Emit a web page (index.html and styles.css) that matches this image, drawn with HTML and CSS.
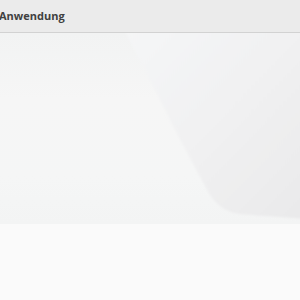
FILE: index.html
```html
<!DOCTYPE html>
<html lang="de">
<head>
<meta charset="UTF-8" />
<meta name="viewport" content="width=device-width, initial-scale=1" />
<title>Anwendung</title>
<link rel="stylesheet" href="styles.css">
</head>
<body>
  <header class="topbar">
    <span class="title">Anwendung</span>
  </header>

  <div class="hero">
    <svg class="hero-art" viewBox="0 0 300 191" preserveAspectRatio="none">
      <defs>
        <linearGradient id="left" x1="0" y1="0" x2="0" y2="1">
          <stop offset="0" stop-color="#f2f3f3" />
          <stop offset="0.35" stop-color="#f6f6f6" />
          <stop offset="0.75" stop-color="#f5f6f6" />
          <stop offset="1" stop-color="#f3f4f4" />
        </linearGradient>
        <linearGradient id="shell" x1="0" y1="0" x2="1" y2="1">
          <stop offset="0" stop-color="#f5f6f7" />
          <stop offset="0.5" stop-color="#f1f1f2" />
          <stop offset="1" stop-color="#e9e9ea" />
        </linearGradient>
        <filter id="soft" x="-10%" y="-10%" width="120%" height="120%">
          <feGaussianBlur stdDeviation="1.2" />
        </filter>
      </defs>
      <rect width="300" height="191" fill="url(#left)" />
      <path d="M121 -10 L310 -10 L310 186 C275 184 252 182 240 181 C224 179 214 170 207 157 L175 97 Z" fill="url(#shell)" filter="url(#soft)" />
    </svg>
  </div>

  <main class="content"></main>
</body>
</html>
```

FILE: styles.css
```css
* {
  box-sizing: border-box;
}

body {
  margin: 0;
  font-family: 'Open Sans', 'Noto Sans', sans-serif;
  background: #fafafa;
  min-height: 100vh;
}

.topbar {
  height: 33px;
  background: #ebebeb;
  border-bottom: 1px solid #d2d2d2;
  display: flex;
  align-items: center;
  padding-left: 0;
}

.title {
  font-size: 11px;
  font-weight: 700;
  color: #404040;
  margin-left: -1px;
  padding-bottom: 2px;
}

.hero {
  height: 191px;
  overflow: hidden;
}

.hero-art {
  display: block;
  width: 100%;
  height: 100%;
}

.content {
  background: #fafafa;
}
```
